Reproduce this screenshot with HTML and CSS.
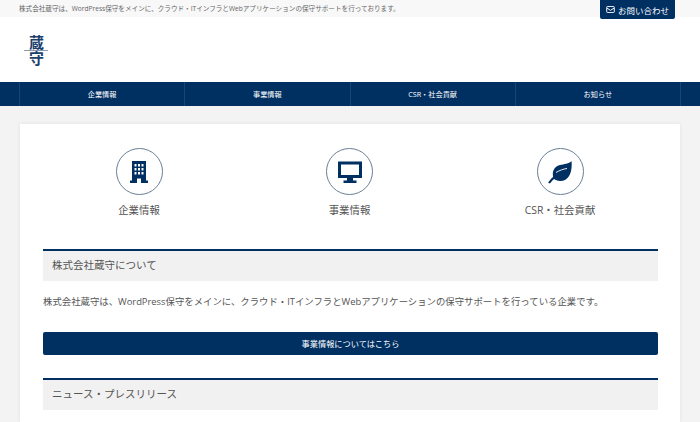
FILE: index.html
```html
<!DOCTYPE html>
<html lang="ja">
<head>
    <meta charset="UTF-8">
    <title>株式会社蔵守</title>
    <link rel="stylesheet" href="styles.css">
</head>
<body>
    <div class="topbar">
        <p class="topbar-text">株式会社蔵守は、WordPress保守をメインに、クラウド・ITインフラとWebアプリケーションの保守サポートを行っております。</p>
        <a class="contact-btn" href="#">
            <svg class="mail-icon" viewBox="0 0 12 10"><rect x="0.6" y="0.6" width="10.8" height="8.8" rx="1.2" fill="none" stroke="#fff" stroke-width="1.4"/><path d="M1 3l5 3.2L11 3" fill="none" stroke="#fff" stroke-width="1.4"/></svg>
            お問い合わせ
        </a>
    </div>
    <header class="header">
        <div class="logo">蔵守</div>
    </header>
    <nav class="nav">
        <ul class="nav-list">
            <li class="nav-item">企業情報</li>
            <li class="nav-item">事業情報</li>
            <li class="nav-item">CSR・社会貢献</li>
            <li class="nav-item">お知らせ</li>
        </ul>
    </nav>
    <main class="card">
        <div class="features">
            <div class="feature">
                <div class="feature-circle">
                    <svg class="feature-icon" viewBox="0 0 24 24"><path fill="#002f62" fill-rule="evenodd" d="M5 1h14v19.500h2V23h-7v-4.500h-4V23H3v-2.500h2zM7.500 4v2.500h2V4zm3.500 0v2.500h2V4zm3.500 0v2.500h2V4zM7.500 8v2.500h2V8zM11 8v2.500h2V8zm3.500 0v2.500h2V8zM7.500 12v2.500h2V12zm3.500 0v2.500h2V12zm3.500 0v2.500h2V12z"/></svg>
                </div>
                <div class="feature-label">企業情報</div>
            </div>
            <div class="feature">
                <div class="feature-circle">
                    <svg class="feature-icon" viewBox="0 0 24 24"><path fill="#002f62" fill-rule="evenodd" d="M0 1.500h24V18h-9v2.500h3.500V23h-13v-2.500H9V18H0zM3 4.500V15h18V4.500z"/></svg>
                </div>
                <div class="feature-label">事業情報</div>
            </div>
            <div class="feature">
                <div class="feature-circle">
                    <svg class="feature-icon" viewBox="0 0 24 24">
                        <path fill="#002f62" d="M23.500 1C24.500 10 22 21 12 21c-2.500 0-5-1-6.500-2.500C3.500 12 6 6.500 12 5c4-1 9-1 11.500-4z"/>
                        <path fill="none" stroke="#002f62" stroke-width="2.200" d="M1 23c2-3 4-5 6.500-6.500"/>
                        <path fill="none" stroke="#fff" stroke-width="0.900" d="M8 12.500c3.500-2 7-3.500 11-4"/>
                    </svg>
                </div>
                <div class="feature-label">CSR・社会貢献</div>
            </div>
        </div>
        <h2 class="section-title">株式会社蔵守について</h2>
        <p class="section-text">株式会社蔵守は、WordPress保守をメインに、クラウド・ITインフラとWebアプリケーションの保守サポートを行っている企業です。</p>
        <a class="wide-btn" href="#">事業情報についてはこちら</a>
        <h2 class="section-title">ニュース・プレスリリース</h2>
    </main>
</body>
</html>
```

FILE: styles.css
```css
html, body {
    height: 100%;
    overflow: hidden;
}
body {
    margin: 0;
    font-family: "Open Sans", "Noto Sans CJK JP", sans-serif;
    background-color: #f3f3f3;
    color: #555;
}
.topbar {
    display: flex;
    justify-content: space-between;
    align-items: flex-start;
    height: 17px;
    padding: 0 25px 0 19px;
    background-color: #f8f8f8;
}
.topbar-text {
    margin: 0;
    font-size: 6.600px;
    line-height: 17px;
    color: #666;
}
.contact-btn {
    display: flex;
    align-items: center;
    justify-content: center;
    gap: 3px;
    width: 75px;
    height: 19px;
    background-color: #002f62;
    color: #fff;
    font-size: 8.500px;
    text-decoration: none;
    border-radius: 0 0 2px 2px;
}
.mail-icon {
    width: 9px;
    height: 7px;
}
.header {
    height: 65px;
    padding: 18px 0 0 24px;
    box-sizing: border-box;
    background-color: #fff;
}
.logo {
    position: relative;
    width: 24px;
    height: 32px;
    display: flex;
    justify-content: center;
    writing-mode: vertical-rl;
    font-family: "Noto Sans CJK JP", serif;
    font-size: 15px;
    font-weight: 700;
    line-height: 24px;
    letter-spacing: 1px;
    color: #1d3f6c;
}
.logo::after {
    content: "";
    position: absolute;
    left: 0;
    top: 15px;
    width: 24px;
    height: 1px;
    background-color: #8a9ab0;
}
.nav {
    height: 24px;
    background-color: #002f62;
}
.nav-list {
    display: flex;
    margin: 0 19px;
    padding: 0;
    list-style: none;
    border-right: 1px solid #174577;
}
.nav-item {
    flex: 1;
    border-left: 1px solid #174577;
    text-align: center;
    font-size: 7.200px;
    line-height: 24px;
    color: #fff;
}
.card {
    margin: 18px 20px 0;
    padding: 24px 22px 12px 23px;
    background-color: #fff;
    box-shadow: 0 0 4px rgba(0, 0, 0, 0.08);
}
.features {
    display: flex;
    justify-content: space-between;
    padding: 0 48px 0 46px;
}
.feature {
    display: flex;
    flex-direction: column;
    align-items: center;
    width: 100px;
}
.feature-circle {
    display: flex;
    align-items: center;
    justify-content: center;
    width: 45px;
    height: 45px;
    border: 1px solid #6a7f96;
    border-radius: 50%;
}
.feature-icon {
    width: 24px;
    height: 24px;
}
.feature-label {
    margin-top: 7px;
    font-size: 10.400px;
    line-height: 16px;
}
.section-title {
    margin: 0;
    padding: 0 9px;
    height: 30px;
    line-height: 29px;
    font-size: 10.500px;
    font-weight: 400;
    background-color: #f1f1f1;
    border-top: 2px solid #002f62;
}
.features + .section-title {
    margin-top: 31px;
}
.section-text {
    margin: 13px 0 0;
    font-size: 9.400px;
    line-height: 16px;
}
.wide-btn {
    display: block;
    margin: 22px 0 23px;
    height: 23px;
    line-height: 23px;
    text-align: center;
    font-size: 8.200px;
    color: #fff;
    text-decoration: none;
    background-color: #002f62;
    border-radius: 2px;
}
```
